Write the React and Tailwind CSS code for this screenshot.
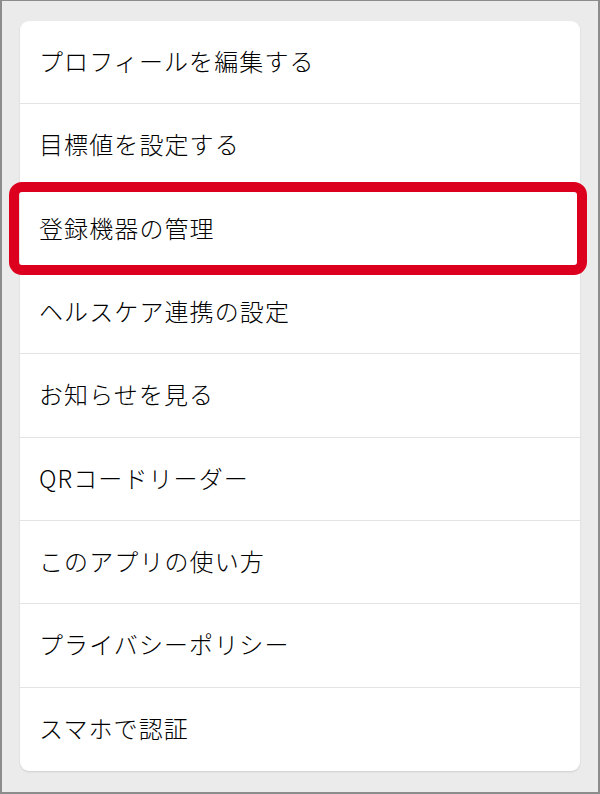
import React from "react";

const items = [
  "プロフィールを編集する",
  "目標値を設定する",
  "登録機器の管理",
  "ヘルスケア連携の設定",
  "お知らせを見る",
  "QRコードリーダー",
  "このアプリの使い方",
  "プライバシーポリシー",
  "スマホで認証",
];

export default function App() {
  return (
    <div
      className="w-[600px] h-[794px] bg-[#ebebeb] border-x-2 border-b-2 border-t border-[#8c8c8c] pt-[20px] pl-[18px] overflow-hidden"
      style={{ fontFamily: '"Noto Sans CJK JP", "Noto Sans", sans-serif' }}
    >
      <div className="w-[560px] bg-white rounded-[9px] shadow-[0_1px_2px_rgba(0,0,0,0.12)]">
        {items.map((t, i) => (
          <div
            key={t}
            className={
              "relative h-[83.33px] flex items-center pl-[19px] text-[24px] text-black font-light " +
              (i < items.length - 1 ? "border-b border-[#e4e4e4]" : "")
            }
          >
            <span className="-mt-[2px] tracking-[1.1px]">{t}</span>
            {i === 2 && (
              <div className="absolute left-[-11px] right-[-7px] top-[-6px] bottom-[-5px] border-[10px] border-[#dc001e] rounded-[13px]" />
            )}
          </div>
        ))}
      </div>
    </div>
  );
}
